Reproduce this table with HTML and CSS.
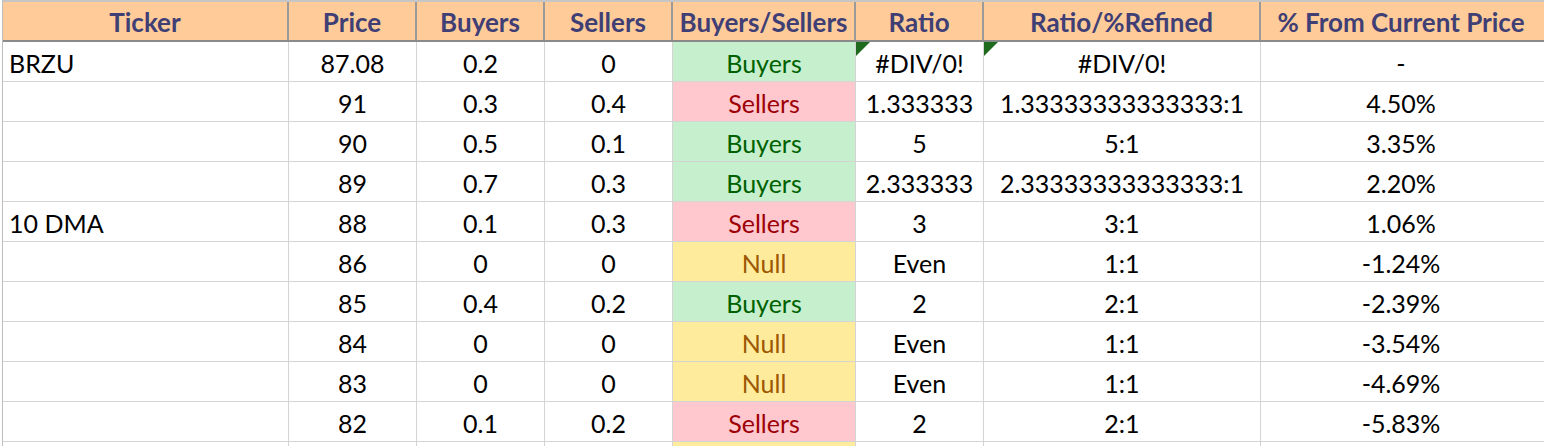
FILE: index.html
```html
<!DOCTYPE html>
<html>
<head>
<meta charset="utf-8">
<link rel="stylesheet" href="styles.css">
</head>
<body>
<div class="sheet">
  <div class="row head">
    <div class="c">Ticker</div><div class="c">Price</div><div class="c">Buyers</div><div class="c">Sellers</div><div class="c">Buyers/Sellers</div><div class="c">Ratio</div><div class="c">Ratio/%Refined</div><div class="c">% From Current Price</div>
  </div>
  <div class="row">
    <div class="c tk">BRZU</div><div class="c">87.08</div><div class="c">0.2</div><div class="c">0</div><div class="c good">Buyers</div><div class="c err">#DIV/0!</div><div class="c err">#DIV/0!</div><div class="c">-</div>
  </div>
  <div class="row">
    <div class="c tk"></div><div class="c">91</div><div class="c">0.3</div><div class="c">0.4</div><div class="c bad">Sellers</div><div class="c">1.333333</div><div class="c">1.33333333333333:1</div><div class="c">4.50%</div>
  </div>
  <div class="row">
    <div class="c tk"></div><div class="c">90</div><div class="c">0.5</div><div class="c">0.1</div><div class="c good">Buyers</div><div class="c">5</div><div class="c">5:1</div><div class="c">3.35%</div>
  </div>
  <div class="row">
    <div class="c tk"></div><div class="c">89</div><div class="c">0.7</div><div class="c">0.3</div><div class="c good">Buyers</div><div class="c">2.333333</div><div class="c">2.33333333333333:1</div><div class="c">2.20%</div>
  </div>
  <div class="row">
    <div class="c tk">10 DMA</div><div class="c">88</div><div class="c">0.1</div><div class="c">0.3</div><div class="c bad">Sellers</div><div class="c">3</div><div class="c">3:1</div><div class="c">1.06%</div>
  </div>
  <div class="row">
    <div class="c tk"></div><div class="c">86</div><div class="c">0</div><div class="c">0</div><div class="c neutral">Null</div><div class="c">Even</div><div class="c">1:1</div><div class="c">-1.24%</div>
  </div>
  <div class="row">
    <div class="c tk"></div><div class="c">85</div><div class="c">0.4</div><div class="c">0.2</div><div class="c good">Buyers</div><div class="c">2</div><div class="c">2:1</div><div class="c">-2.39%</div>
  </div>
  <div class="row">
    <div class="c tk"></div><div class="c">84</div><div class="c">0</div><div class="c">0</div><div class="c neutral">Null</div><div class="c">Even</div><div class="c">1:1</div><div class="c">-3.54%</div>
  </div>
  <div class="row">
    <div class="c tk"></div><div class="c">83</div><div class="c">0</div><div class="c">0</div><div class="c neutral">Null</div><div class="c">Even</div><div class="c">1:1</div><div class="c">-4.69%</div>
  </div>
  <div class="row">
    <div class="c tk"></div><div class="c">82</div><div class="c">0.1</div><div class="c">0.2</div><div class="c bad">Sellers</div><div class="c">2</div><div class="c">2:1</div><div class="c">-5.83%</div>
  </div>
  <div class="row">
    <div class="c tk"></div><div class="c"></div><div class="c"></div><div class="c"></div><div class="c neutral"></div><div class="c"></div><div class="c"></div><div class="c"></div>
  </div>
</div>
</body>
</html>
```
FILE: styles.css
```css
html, body {
  margin: 0;
  padding: 0;
  background: #fff;
  overflow: hidden;
}
.sheet {
  font-family: Lato, "Open Sans", sans-serif;
  font-size: 25px;
  color: #000;
  border-top: 2px solid #c6c6c6;
  margin-left: 2px;
  border-left: 1px solid #bdbdbd;
  width: 1560px;
}
.row {
  display: grid;
  grid-template-columns: 286px 128px 128px 128px 183px 128px 277px 280px 1fr;
  height: 40px;
  border-bottom: 1px solid #d4d4d4;
  box-sizing: border-box;
}
.c {
  position: relative;
  display: flex;
  align-items: center;
  justify-content: center;
  border-right: 1px solid #d4d4d4;
  white-space: nowrap;
  padding-top: 2px;
  box-sizing: border-box;
}
.c:last-child {
  border-right: none;
}
.tk {
  justify-content: flex-start;
  padding-left: 6px;
}
.head {
  height: 40px;
  background: #ffcc99;
  color: #3f3f76;
  font-weight: 700;
  font-size: 26px;
  border-bottom: 2px solid #8a8a8a;
}
.head .c {
  border-right: 2px solid #9a9a9a;
  padding-top: 1px;
}
.head .c:last-child {
  border-right: none;
}
.good {
  background: #c6efce;
  color: #006100;
}
.bad {
  background: #ffc7ce;
  color: #9c0006;
}
.neutral {
  background: #ffeb9c;
  color: #9c5700;
}
.err::before {
  content: "";
  position: absolute;
  left: 0;
  top: 0;
  border-top: 14px solid #1e6b1e;
  border-right: 14px solid transparent;
}
```
